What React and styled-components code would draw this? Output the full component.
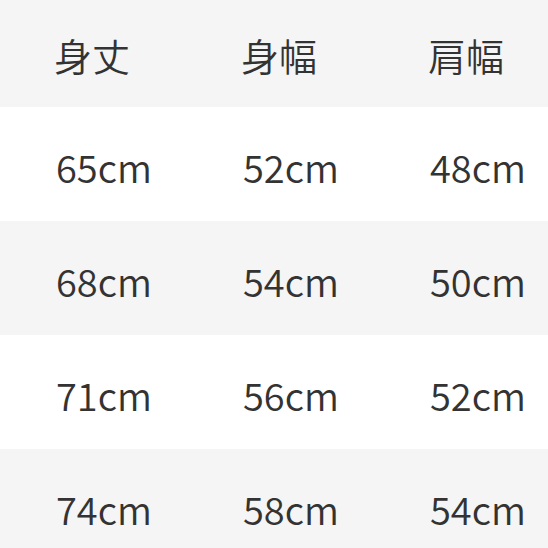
import React from 'react';
import styled, { createGlobalStyle } from 'styled-components';

const GlobalStyle = createGlobalStyle`
  html, body {
    margin: 0;
    padding: 0;
    background: #ffffff;
  }
`;

const Table = styled.div`
  width: 548px;
  height: 548px;
  overflow: hidden;
  font-family: "Noto Sans CJK JP", "Noto Sans", sans-serif;
  color: #333333;
`;

const Row = styled.div`
  display: grid;
  grid-template-columns: 187px 187px 1fr;
  align-items: center;
  padding-left: 56px;
  height: ${(p) => p.h}px;
  background: ${(p) => (p.shaded ? '#f5f5f5' : '#ffffff')};
`;

const Cell = styled.div`
  font-size: 38px;
  font-weight: 350;
  line-height: 1;
  padding-top: ${(p) => (p.head ? '2px' : '6px')};
  margin-left: ${(p) => (p.head ? '-2px' : '0')};
  white-space: nowrap;
`;

const header = ['身丈', '身幅', '肩幅'];
const rows = [
  ['65cm', '52cm', '48cm'],
  ['68cm', '54cm', '50cm'],
  ['71cm', '56cm', '52cm'],
  ['74cm', '58cm', '54cm'],
];

export default function App() {
  return (
    <>
      <GlobalStyle />
      <Table>
        <Row shaded h={107}>
          {header.map((t) => (
            <Cell head key={t}>{t}</Cell>
          ))}
        </Row>
        {rows.map((r, i) => (
          <Row key={i} shaded={i % 2 === 1} h={114}>
            {r.map((t, j) => (
              <Cell key={j}>{t}</Cell>
            ))}
          </Row>
        ))}
      </Table>
    </>
  );
}
